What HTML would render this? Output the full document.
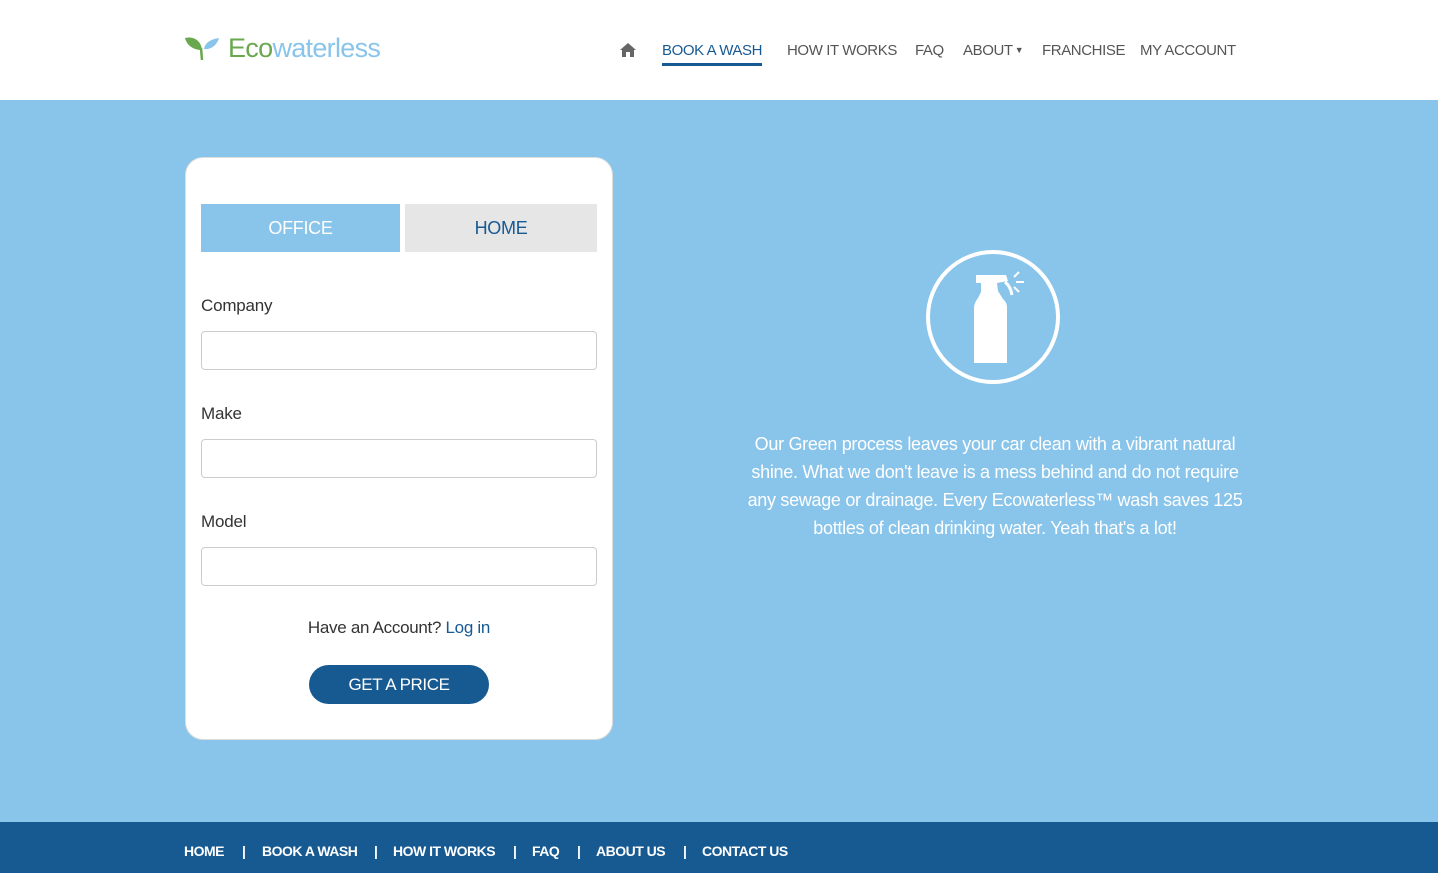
<!DOCTYPE html>
<html><head><style>
*{margin:0;padding:0;box-sizing:border-box}
body{width:1438px;height:873px;position:relative;font-family:"Liberation Sans",sans-serif;background:#89c4ea;overflow:hidden}
.hdr{position:absolute;left:0;top:0;width:1438px;height:100px;background:#fff}
.logo{position:absolute;left:228px;top:33px;font-size:27px;letter-spacing:-0.7px}
.nav{position:absolute;top:42px;font-size:15px;color:#555;letter-spacing:-0.4px}
.nav span{position:absolute;white-space:nowrap}
.card{position:absolute;left:185px;top:157px;width:428px;height:583px;background:#fff;border:1px solid #ddd;border-radius:18px}
.tab{position:absolute;top:46px;height:48px;font-size:18px;text-align:center;line-height:48px;letter-spacing:-0.3px}
label{position:absolute;left:15px;font-size:17px;color:#333;letter-spacing:-0.2px}
.in{position:absolute;left:15px;width:396px;height:39px;border:1px solid #ccc;border-radius:4px}
.foot{position:absolute;left:0;top:822px;width:1438px;height:51px;background:#175a92;color:#fff;font-size:14px;font-weight:bold;letter-spacing:-0.5px}
.foot span{position:absolute;top:21px;white-space:nowrap}
</style></head><body>
<div class="hdr">
<svg style="position:absolute;left:185px;top:36px" width="36" height="25" viewBox="0 0 36 25"><path d="M0 2 C8 0 16 4 17 14 C9 14 2 10 0 2Z" fill="#6aa84f"/><path d="M16 12 L17 24" stroke="#6aa84f" stroke-width="2.5"/><path d="M19 13 C20 6 27 3 34 2 C32 9 26 14 19 13Z" fill="#89c4ea"/></svg>
<div class="logo"><span style="color:#6aa84f">Eco</span><span style="color:#89c4ea">waterless</span></div>
<div class="nav">
<svg style="position:absolute;left:619px;top:0" width="18" height="15" viewBox="0 0 18 15"><path d="M9 1 L1 8 L3 8 L3 15 L7 15 L7 10 L11 10 L11 15 L15 15 L15 8 L17 8Z" fill="#666"/></svg>
<span style="left:662px;color:#175a92">BOOK A WASH</span>
<div style="position:absolute;left:662px;top:21px;width:100px;height:3px;background:#175a92"></div>
<span style="left:787px">HOW IT WORKS</span>
<span style="left:915px">FAQ</span>
<span style="left:963px">ABOUT<span style="position:relative;font-size:9px;top:-2px;left:2px">▼</span></span>
<span style="left:1042px">FRANCHISE</span>
<span style="left:1140px">MY ACCOUNT</span>
</div>
</div>
<div class="card">
<div class="tab" style="left:15px;width:199px;background:#89c4ea;color:#fff">OFFICE</div>
<div class="tab" style="left:219px;width:192px;background:#e6e6e6;color:#175a92">HOME</div>
<label style="top:138px">Company</label><div class="in" style="top:173px"></div>
<label style="top:246px">Make</label><div class="in" style="top:281px"></div>
<label style="top:354px">Model</label><div class="in" style="top:389px"></div>
<div style="position:absolute;top:460px;width:100%;text-align:center;font-size:17px;color:#333;letter-spacing:-0.3px">Have an Account? <span style="color:#175a92">Log in</span></div>
<div style="position:absolute;left:123px;top:507px;width:180px;height:39px;border-radius:20px;background:#175a92;color:#fff;font-size:17px;text-align:center;line-height:39px;letter-spacing:-0.4px">GET A PRICE</div>
</div>
<svg style="position:absolute;left:923px;top:247px" width="140" height="140" viewBox="0 0 140 140">
<circle cx="70" cy="70" r="65" fill="none" stroke="#fff" stroke-width="4"/>
<path d="M53 28 L83 28 L85 34 L74 36 L75 44 L80 52 C84 56 84 58 84 62 L84 116 L51 116 L51 62 C51 58 52 55 55 51 L58 45 L58 36 L53 36Z" fill="#fff"/>
<path d="M82 35 C86 38 88 42 89 48" stroke="#fff" stroke-width="3" fill="none"/>
<path d="M91 30 L96 25 M93 35 L101 35 M91 40 L96 45" stroke="#fff" stroke-width="2"/>
</svg>
<div style="position:absolute;left:740px;top:430px;width:510px;text-align:center;color:#fff;font-size:18px;line-height:28px;letter-spacing:-0.3px">Our Green process leaves your car clean with a vibrant natural shine. What we don't leave is a mess behind and do not require any sewage or drainage. Every Ecowaterless™ wash saves 125 bottles of clean drinking water. Yeah that's a lot!</div>
<div class="foot">
<span style="left:184px">HOME</span><span style="left:242px">|</span>
<span style="left:262px">BOOK A WASH</span><span style="left:374px">|</span>
<span style="left:393px">HOW IT WORKS</span><span style="left:513px">|</span>
<span style="left:532px">FAQ</span><span style="left:577px">|</span>
<span style="left:596px">ABOUT US</span><span style="left:683px">|</span>
<span style="left:702px">CONTACT US</span>
</div>
</body></html>
